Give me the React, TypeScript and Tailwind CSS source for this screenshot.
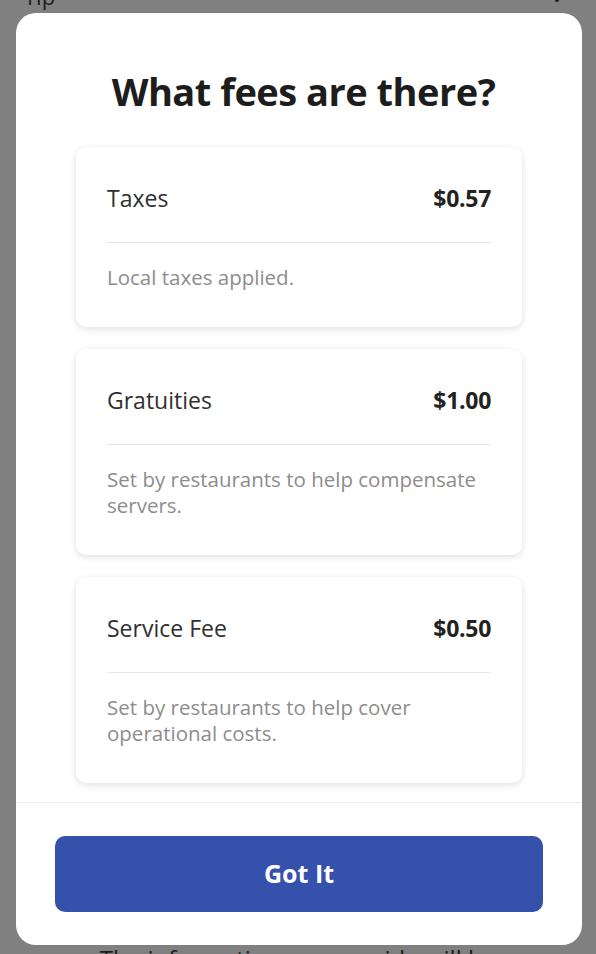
const FEES = [
  { name: 'Taxes', amount: '$0.57', note: 'Local taxes applied.' },
  { name: 'Gratuities', amount: '$1.00', note: 'Set by restaurants to help compensate servers.' },
  { name: 'Service Fee', amount: '$0.50', note: 'Set by restaurants to help cover operational costs.' },
]

function FeeCard({ name, amount, note }: { name: string; amount: string; note: string }) {
  return (
    <div className="rounded-[10px] bg-white px-[31px] pt-[37px] pb-[36px] shadow-[0_2px_7px_rgba(0,0,0,0.13)]">
      <div className="flex items-center justify-between">
        <span className="text-[23px] leading-[28px] text-[#303030]">{name}</span>
        <span className="text-[23px] leading-[28px] font-bold tracking-[-0.3px] text-[#222]">{amount}</span>
      </div>
      <div className="mt-[30px] h-px bg-[#e7e7e7]" />
      <p className="mt-[21px] text-[20.5px] leading-[26.5px] text-[#8d8d8d]">{note}</p>
    </div>
  )
}

export default function App() {
  return (
    <div
      className="relative h-[954px] w-[596px] overflow-hidden bg-[#808080]"
      style={{ fontFamily: '"Open Sans", "Noto Sans", sans-serif' }}
    >
      {/* page behind the overlay */}
      <div className="flex h-[13px] items-start justify-between overflow-hidden px-[24px]">
        <span className="-mt-[15px] text-[22px] leading-[22px] text-[#1c1c1c]">Tip</span>
        <span className="mr-[13px] h-[2px] w-[4px] rounded-b-full bg-[#1c1c1c]" />
      </div>

      {/* modal */}
      <div className="ml-[16px] flex h-[932px] w-[566px] flex-col overflow-hidden rounded-[20px] bg-white">
        <div className="flex flex-1 flex-col px-[60px] pt-[56px]">
          <h2 className="pl-[9px] text-center text-[38px] leading-[44px] font-bold tracking-[-0.5px] text-[#1d1d1d]">
            What fees are there?
          </h2>
          <div className="mt-[34px] flex flex-col gap-[22px]">
            {FEES.map((f) => (
              <FeeCard key={f.name} {...f} />
            ))}
          </div>
        </div>
        <div className="border-t border-[#ececec] px-[39px] pt-[33px] pb-[33px]">
          <button className="flex h-[76px] w-full items-center justify-center rounded-[10px] bg-[#3551ab] text-[25px] font-bold text-white">
            Got It
          </button>
        </div>
      </div>

      <p className="text-center text-[24px] leading-[28px] text-[#1c1c1c]">
        The information you provide will be
      </p>
    </div>
  )
}
